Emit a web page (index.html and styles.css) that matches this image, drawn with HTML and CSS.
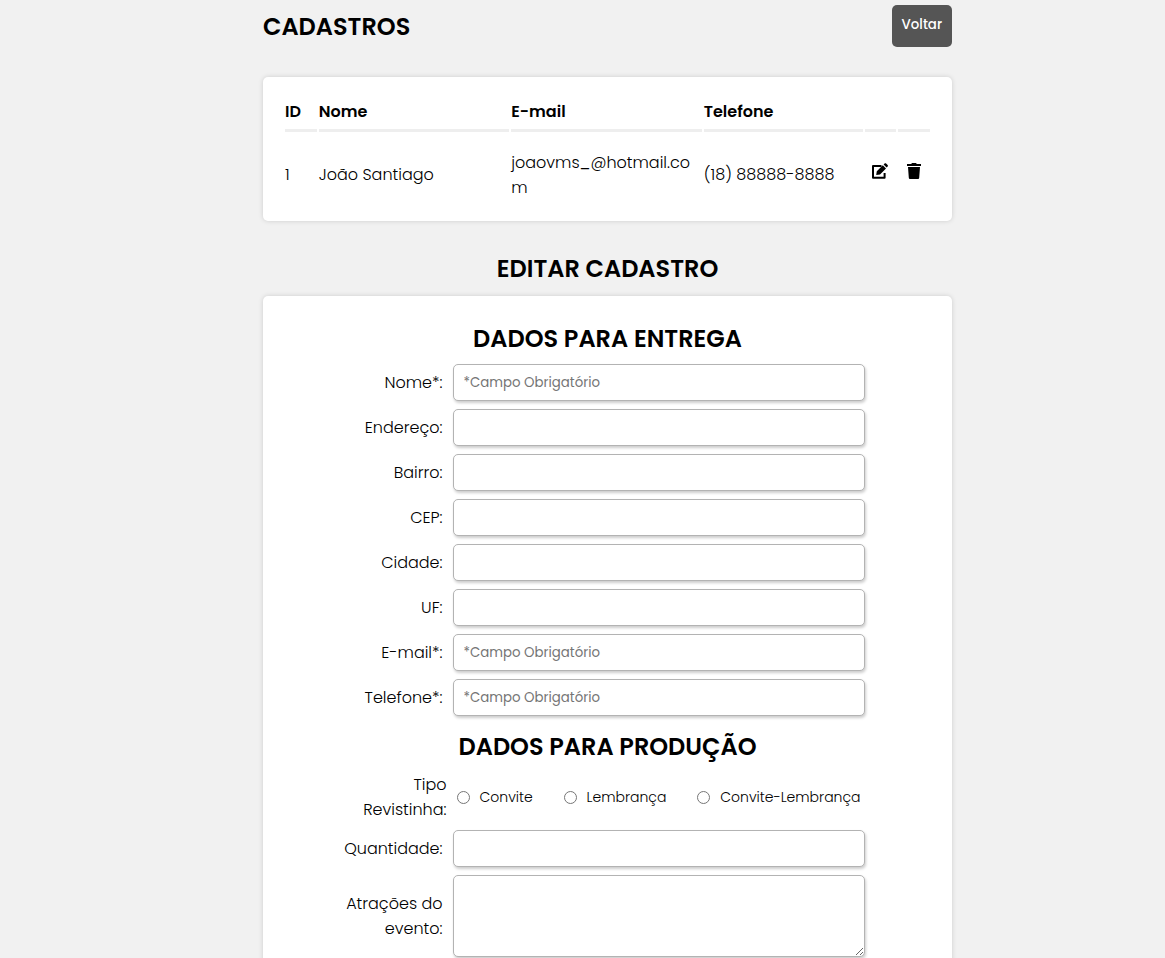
FILE: index.html
```html
<!DOCTYPE html>
<html lang="pt-BR">
<head>
<meta charset="utf-8">
<meta name="viewport" content="width=device-width, initial-scale=1">
<title>Cadastros</title>
<link rel="stylesheet" href="styles.css">
</head>
<body>
<main class="page">
  <header class="topbar">
    <h1 class="title">CADASTROS</h1>
    <button type="button" class="back">Voltar</button>
  </header>

  <section class="panel panel-table">
    <table class="records">
      <colgroup>
        <col class="col-small"><col class="col-wide"><col class="col-wide"><col class="col-phone"><col class="col-small"><col class="col-small">
      </colgroup>
      <thead>
        <tr><th>ID</th><th>Nome</th><th>E-mail</th><th>Telefone</th><th></th><th></th></tr>
      </thead>
      <tbody>
        <tr>
          <td>1</td>
          <td>João Santiago</td>
          <td>joaovms_@hotmail.com</td>
          <td>(18) 88888-8888</td>
          <td class="action">
            <button type="button" class="icon-button" aria-label="Editar">
              <svg viewBox="0 0 16 16" width="16" height="16"><path d="M9.500 3H1v11.800h11.600V10" fill="none" stroke="#000" stroke-width="2" stroke-linejoin="round"/><path d="M4.200 12l.6-3.800 6-6 3.200 3.200-6 6zM11.600 1.500l1-1c.5-.5 1-.5 1.500 0l1.500 1.500c.5.5.5 1 0 1.500l-1 1z"/></svg>
            </button>
          </td>
          <td class="action">
            <button type="button" class="icon-button" aria-label="Excluir">
              <svg viewBox="0 0 16 16" width="16" height="16"><path d="M1 1h4.200L6 0h4l.8 1H15v2H1zM2 4h12l-.8 10.700c-.1.800-.6 1.300-1.400 1.300H4.200c-.8 0-1.300-.5-1.400-1.300z"/></svg>
            </button>
          </td>
        </tr>
      </tbody>
    </table>
  </section>

  <h2 class="title section-title">EDITAR CADASTRO</h2>

  <form class="panel form">
    <h2 class="title">DADOS PARA ENTREGA</h2>
    <div class="fields">
      <div class="field"><label for="nome">Nome*:</label><input id="nome" type="text" placeholder="*Campo Obrigatório"></div>
      <div class="field"><label for="endereco">Endereço:</label><input id="endereco" type="text"></div>
      <div class="field"><label for="bairro">Bairro:</label><input id="bairro" type="text"></div>
      <div class="field"><label for="cep">CEP:</label><input id="cep" type="text"></div>
      <div class="field"><label for="cidade">Cidade:</label><input id="cidade" type="text"></div>
      <div class="field"><label for="uf">UF:</label><input id="uf" type="text"></div>
      <div class="field"><label for="email">E-mail*:</label><input id="email" type="email" placeholder="*Campo Obrigatório"></div>
      <div class="field"><label for="telefone">Telefone*:</label><input id="telefone" type="tel" placeholder="*Campo Obrigatório"></div>
    </div>
    <h2 class="title">DADOS PARA PRODUÇÃO</h2>
    <div class="fields">
      <div class="field field-radio" role="radiogroup" aria-labelledby="tipo">
        <span class="caption" id="tipo">Tipo Revistinha:</span>
        <div class="options">
          <label class="option"><input type="radio" name="tipo">Convite</label>
          <label class="option"><input type="radio" name="tipo">Lembrança</label>
          <label class="option"><input type="radio" name="tipo">Convite-Lembrança</label>
        </div>
      </div>
      <div class="field"><label for="quantidade">Quantidade:</label><input id="quantidade" type="text"></div>
      <div class="field"><label for="atracoes">Atrações do evento:</label><textarea id="atracoes"></textarea></div>
    </div>
  </form>
</main>
</body>
</html>
```
FILE: styles.css
```css
* {
  box-sizing: border-box;
}

body {
  margin: 0;
  padding: 5px 0 0 50px;
  background: #f1f1f1;
  color: #000;
  font: 300 16px/25px Poppins, Inter, sans-serif;
}

.page {
  width: 100%;
  max-width: 689px;
  margin: 0 auto;
}

.topbar {
  display: flex;
  justify-content: space-between;
  align-items: flex-end;
  margin-bottom: 30px;
}

.title {
  margin: 0;
  font-size: 24px;
  font-weight: 600;
  line-height: 36px;
  text-align: center;
}

.topbar .title {
  line-height: 40px;
}

.back {
  height: 42px;
  padding: 0 10px 2px;
  border: 0;
  border-radius: 5px;
  background: #555;
  color: #fff;
  font-family: Poppins, Inter, sans-serif;
  font-weight: 500;
}

.panel {
  padding: 20px;
  border-radius: 5px;
  background: #fff;
  box-shadow: 0 0 5px rgba(0, 0, 0, 0.15);
}

.panel-table {
  padding-bottom: 4px;
}

.section-title {
  margin: 30px 0 9px;
}

.records {
  width: 100%;
  table-layout: fixed;
  border-spacing: 2px;
}

.col-small {
  width: 5%;
}

.col-wide {
  width: 30%;
}

.col-phone {
  width: 25%;
}

.records th,
.records td {
  padding: 0;
  text-align: left;
  overflow-wrap: anywhere;
}

.records th {
  height: 33px;
  padding-bottom: 5px;
  border-bottom: 3px solid #eee;
  font-weight: 600;
}

.records td {
  height: 81px;
}

.records .action {
  text-align: center;
}

.icon-button {
  width: 16px;
  height: 20px;
  padding: 0;
  border: 0;
  background: none;
}

.icon-button svg {
  display: block;
}

.form {
  padding: 25px 32px 30px 20px;
}

.form .title {
  padding-left: 12px;
}

.fields {
  display: grid;
  gap: 8px;
  margin: 7px 0 13px;
}

.field {
  display: grid;
  grid-template-columns: 104px minmax(0, 412px);
  justify-content: center;
  align-items: center;
  gap: 10px;
  text-align: right;
}

.field-radio {
  grid-template-columns: 108px minmax(0, 412px);
  gap: 6px;
}

.field > input,
.field > textarea {
  display: block;
  width: 100%;
  height: 37px;
  padding: 0 10px;
  border: 1px solid #b3b3b3;
  border-radius: 5px;
  background: #fff;
  box-shadow: 1px 2px 3px rgba(0, 0, 0, 0.2);
  font-family: Poppins, Inter, sans-serif;
}

.field > input::placeholder {
  color: #757575;
}

.field > textarea {
  height: 82px;
}

.options {
  display: flex;
  justify-content: space-between;
  padding: 0 4px;
  font-size: 14px;
}

.option {
  display: flex;
  align-items: center;
  gap: 10px;
}

.option input {
  width: 13px;
  height: 13px;
  margin: 0;
}
```
